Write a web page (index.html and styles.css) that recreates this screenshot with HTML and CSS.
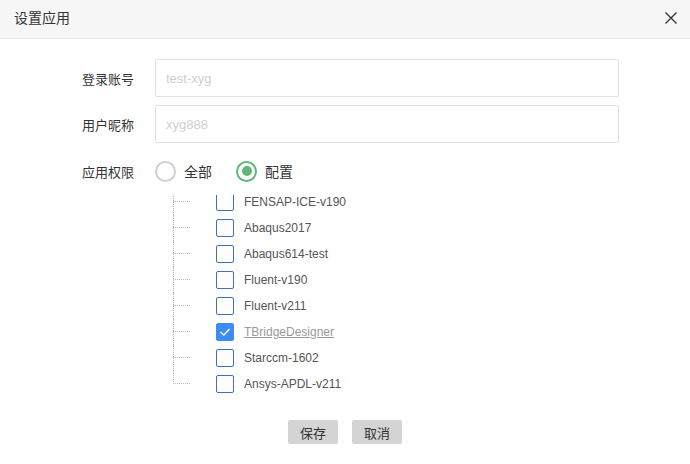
FILE: index.html
```html
<!DOCTYPE html>
<html lang="zh">
<head>
<meta charset="utf-8">
<link rel="stylesheet" href="styles.css">
</head>
<body>
<div class="dialog">
  <div class="header">
    <span class="title">设置应用</span>
    <span class="close">
      <svg width="14" height="14" viewBox="0 0 14 14"><path d="M1.5 1.5L12.5 12.5M12.5 1.5L1.5 12.5" stroke="#333" stroke-width="1.4" fill="none"/></svg>
    </span>
  </div>
  <div class="form">
    <div class="row">
      <label class="label">登录账号</label>
      <input class="input" placeholder="test-xyg">
    </div>
    <div class="row">
      <label class="label">用户昵称</label>
      <input class="input" placeholder="xyg888">
    </div>
    <div class="row radio-row">
      <span class="label">应用权限</span>
      <span class="radio"></span><span class="radio-text">全部</span>
      <span class="radio checked"></span><span class="radio-text">配置</span>
    </div>
    <div class="tree">
      <ul class="list">
        <li><span class="box"></span><span class="name">FENSAP-ICE-v190</span></li>
        <li><span class="box"></span><span class="name">Abaqus2017</span></li>
        <li><span class="box"></span><span class="name">Abaqus614-test</span></li>
        <li><span class="box"></span><span class="name">Fluent-v190</span></li>
        <li><span class="box"></span><span class="name">Fluent-v211</span></li>
        <li><span class="box on"><svg width="12" height="10" viewBox="0 0 12 10"><path d="M1.5 5L4.8 8L10.5 2" stroke="#fff" stroke-width="1.4" fill="none"/></svg></span><span class="name sel">TBridgeDesigner</span></li>
        <li><span class="box"></span><span class="name">Starccm-1602</span></li>
        <li><span class="box"></span><span class="name">Ansys-APDL-v211</span></li>
      </ul>
    </div>
    <div class="buttons">
      <button class="btn">保存</button>
      <button class="btn">取消</button>
    </div>
  </div>
</div>
</body>
</html>
```

FILE: styles.css
```css
html, body {
  margin: 0;
  padding: 0;
  background: #fff;
}
body {
  width: 690px;
  height: 464px;
  overflow: hidden;
  font-family: "Liberation Sans", Arial, "Noto Sans CJK SC", sans-serif;
  color: #333;
}
.header {
  height: 38px;
  background: #f7f7f7;
  border-bottom: 1px solid #e9e9e9;
  display: flex;
  align-items: center;
  justify-content: space-between;
  padding: 0 12px 0 14px;
}
.title {
  font-size: 14px;
  color: #333;
  margin-top: -4px;
  font-family: "Noto Sans CJK SC", sans-serif;
}
.close {
  display: flex;
  width: 14px;
  height: 14px;
  margin-top: -2px;
}
.form {
  padding: 20px 0 0 82px;
}
.row {
  display: flex;
  align-items: center;
  margin-bottom: 8px;
}
.label {
  width: 73px;
  font-size: 13px;
  color: #333;
  font-family: "Noto Sans CJK SC", sans-serif;
}
.input {
  box-sizing: border-box;
  width: 464px;
  height: 38px;
  border: 1px solid #e2e2e2;
  border-radius: 2px;
  padding: 0 10px;
  font-size: 13px;
  font-family: "Liberation Sans", Arial, sans-serif;
  outline: none;
  margin: 0;
}
.input::placeholder {
  color: #cfcfcf;
}
.radio-row {
  height: 40px;
  margin-bottom: 0;
}
.radio {
  box-sizing: border-box;
  width: 21px;
  height: 21px;
  border: 2px solid #d0d0d0;
  border-radius: 50%;
  display: flex;
  align-items: center;
  justify-content: center;
}
.radio.checked {
  border-color: #5fb878;
}
.radio.checked::after {
  content: "";
  width: 10px;
  height: 10px;
  border-radius: 50%;
  background: #5fb878;
}
.radio-text {
  font-size: 14px;
  margin-left: 8px;
  margin-right: 24px;
  color: #333;
  font-family: "Noto Sans CJK SC", sans-serif;
}
.tree {
  margin: 4px 0 0 91px;
  height: 200px;
  overflow: hidden;
}
.list {
  list-style: none;
  margin: -6px 0 0 0;
  padding: 0;
}
.list li {
  position: relative;
  height: 26px;
  display: flex;
  align-items: center;
  padding-left: 43px;
}
.list li::before {
  content: "";
  position: absolute;
  left: 0;
  top: 12px;
  width: 17px;
  border-top: 1px dotted #b5b5b5;
}
.list li::after {
  content: "";
  position: absolute;
  left: 0;
  top: 0;
  height: 26px;
  border-left: 1px dotted #b5b5b5;
}
.list li:last-child::after {
  height: 13px;
}
.box {
  box-sizing: border-box;
  width: 18px;
  height: 18px;
  border: 1.5px solid #3a72b5;
  border-radius: 2px;
  display: flex;
  align-items: center;
  justify-content: center;
  background: #fff;
}
.box.on {
  background: #3d8cf5;
  border-color: #3d8cf5;
}
.name {
  margin-left: 10px;
  font-size: 12px;
  color: #555;
}
.name.sel {
  color: #999;
  text-decoration: underline;
}
.buttons {
  display: flex;
  gap: 14px;
  margin: 25px 0 0 206px;
}
.btn {
  width: 50px;
  height: 24px;
  border: none;
  border-radius: 2px;
  background: #d4d4d4;
  color: #333;
  font-size: 13px;
  font-family: "Noto Sans CJK SC", sans-serif;
  padding: 0;
}
```
